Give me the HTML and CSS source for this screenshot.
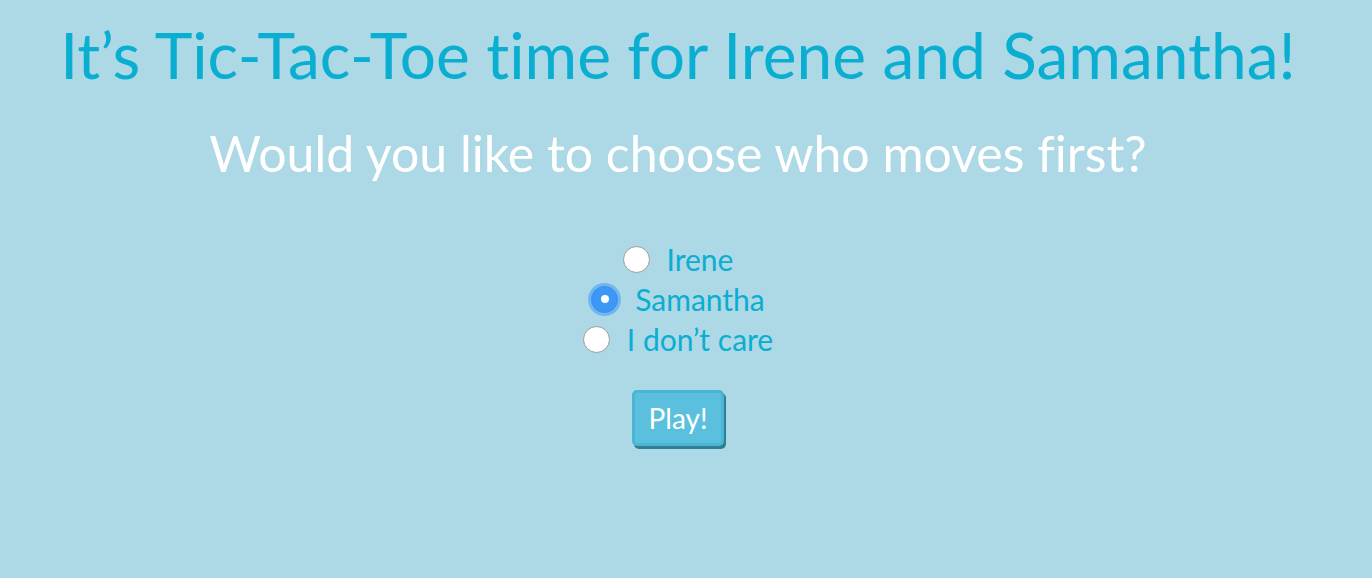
FILE: index.html
```html
<!DOCTYPE html>
<html>
<head>
<meta charset="utf-8">
<link rel="stylesheet" href="styles.css">
</head>
<body>
<main class="page">
  <h1 class="title">It’s Tic-Tac-Toe time for Irene and Samantha!</h1>
  <h2 class="subtitle">Would you like to choose who moves first?</h2>
  <form class="choices">
    <label class="choice"><input class="radio" type="radio" name="first"><span>Irene</span></label>
    <label class="choice"><input class="radio focused" type="radio" name="first" checked><span>Samantha</span></label>
    <label class="choice"><input class="radio" type="radio" name="first"><span>I don’t care</span></label>
    <button class="play" type="button">Play!</button>
  </form>
</main>
</body>
</html>
```
FILE: styles.css
```css
html, body {
  margin: 0;
  padding: 0;
  background: #add8e6;
  height: 100%;
}
.page {
  font-family: Lato, "Open Sans", sans-serif;
  font-variant-ligatures: none;
  text-align: center;
  padding: 20px 16px 0 0;
}
.title {
  margin: 0;
  font-size: 64px;
  font-weight: 400;
  color: #0aaed1;
  line-height: 70px;
}
.subtitle {
  margin: 35px 0 0;
  font-size: 50px;
  font-weight: 400;
  color: #ffffff;
  line-height: 56px;
}
.choices {
  margin-top: 58px;
  display: flex;
  flex-direction: column;
  align-items: center;
}
.choice {
  display: flex;
  align-items: center;
  height: 40px;
  font-size: 30px;
  color: #0aaed1;
  gap: 17px;
}
.radio {
  appearance: none;
  -webkit-appearance: none;
  margin: 0;
  width: 27px;
  height: 27px;
  border-radius: 50%;
  background: #fff;
  border: 1px solid #9a9a9a;
  box-sizing: border-box;
  display: grid;
  place-items: center;
}
.radio:checked {
  background: #3d97f5;
  border-color: #3a8ee8;
}
.radio:checked::after {
  content: "";
  width: 8px;
  height: 8px;
  border-radius: 50%;
  background: #fff;
}
.radio.focused {
  box-shadow: 0 0 0 3px #72b5f3;
}
.play {
  margin-top: 31px;
  font-family: Lato, "Open Sans", sans-serif;
  font-size: 28px;
  color: #fff;
  background: #5bc0de;
  border: 3px solid #4ab6d6;
  border-radius: 5px;
  width: 92px;
  height: 56px;
  padding: 0;
  box-shadow: 2px 3px 0 #2f7f93;
}
```
